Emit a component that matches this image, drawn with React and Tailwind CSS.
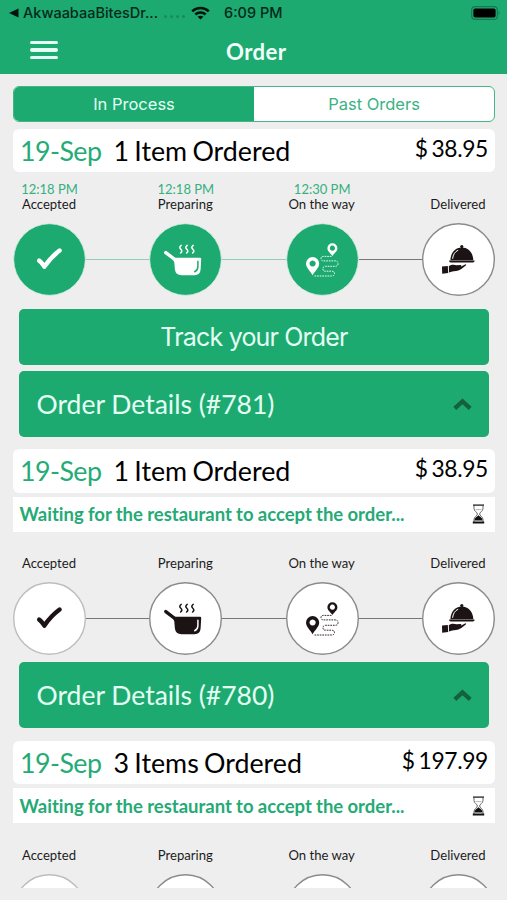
import React from "react";

function CheckIcon() {
  return (
    <path
      d="M26.2 37.6 C28.5 39.2 29.5 41 31.4 43.6 C35.5 37.5 40 32.5 46.6 27.6"
      fill="none"
      stroke="currentColor"
      strokeWidth="4.4"
      strokeLinecap="round"
      strokeLinejoin="round"
    />
  );
}

function PotIcon({ gap }) {
  return (
    <g fill="none" stroke="currentColor" strokeLinecap="round">
      <path d="M16.8 29.6 L26.5 37" strokeWidth="3.4" />
      <path
        d="M23.5 34.8 H51 Q52.3 34.8 52.2 36.2 L51.6 46.5 Q51.2 52.2 45.5 52.2 H32.5 Q26.6 52.2 25.9 46.5 L25.3 39.5 Z"
        fill="currentColor"
        stroke="none"
      />
      <path d="M48.9 38.2 V43.5 Q48.8 47.4 45.7 48.8" stroke={gap} strokeWidth="1.5" />
      <path
        d="M32.2 22.4 q-2.6 1.8 -0.4 3.8 t-0.2 3.8 M38.2 22.4 q-2.6 1.8 -0.4 3.8 t-0.2 3.8 M44.2 22.4 q-2.6 1.8 -0.4 3.8 t-0.2 3.8"
        strokeWidth="1.5"
      />
    </g>
  );
}

function RouteIcon() {
  return (
    <g fill="currentColor">
      <path
        fillRule="evenodd"
        d="M26.6 52.2 C24.5 48.4 20 45 20 40.6 A6.6 6.6 0 0 1 33.2 40.6 C33.2 45 28.7 48.4 26.6 52.2 Z M26.6 37.4 a3.1 3.1 0 1 0 0.01 0 Z"
      />
      <path
        fillRule="evenodd"
        d="M46.4 33 C44.8 30.4 41.4 28.4 41.4 25.2 A5 5 0 0 1 51.4 25.2 C51.4 28.4 48 30.4 46.4 33 Z M46.4 22.6 a2.6 2.6 0 1 0 0.01 0 Z"
      />
      <path
        d="M45.5 33.4 H37.5 Q35 33.4 35 35.6 T37.5 37.9 H49 Q52 37.9 52 40.6 T49 43.3 H39.5 Q37 43.3 37 45.8 T39.5 48.2 H45.5 Q48.5 48.2 48.5 50.6 T45.5 53 H27.5"
        fill="none"
        stroke="currentColor"
        strokeWidth="0.9"
        strokeDasharray="1.7 0.9"
      />
    </g>
  );
}

function ServeIcon() {
  return (
    <g fill="currentColor">
      <circle cx="39.8" cy="23.6" r="1.6" />
      <path d="M28.4 37.2 C28.6 29.5 33.4 24.6 39.8 24.6 S51 29.5 51.3 37.2 Z" />
      <path d="M27.2 37.4 H52.5 V38.6 Q51.8 39.6 50.6 39.6 H29 Q27.8 39.6 27.2 38.6 Z" />
      <path d="M30.6 35.8 C31 31.6 33 28.6 36.2 27.2" fill="none" stroke="#fff" strokeWidth="1" />
      <path d="M20 43.6 L25.8 43 L26.2 50 L20.2 50.8 Z" />
      <path d="M26.8 43.2 C29.5 41.2 32.4 41.6 34.4 42.2 L39 42 Q40 42.8 38.6 43.7 L43.6 41.2 Q44.8 41.4 43.8 42.6 Q39.6 46.4 36.4 47.6 C33.4 48.4 30 48.4 27 49.4 Z" />
    </g>
  );
}

const STEPS = [
  { label: "Accepted", Icon: CheckIcon },
  { label: "Preparing", Icon: PotIcon },
  { label: "On the way", Icon: RouteIcon },
  { label: "Delivered", Icon: ServeIcon },
];

function Step({ step, index, time, done }) {
  const { label, Icon } = step;
  const ring = done
    ? "text-white fill-[#1daa71] stroke-[#d5ebe1]"
    : index === 0
      ? "text-[#1c1315] fill-white stroke-[#bdbdbd]"
      : "text-[#1c1315] fill-white stroke-[#8b8b8b]";
  return (
    <div className="flex w-[73px] flex-col items-center">
      <div className="h-[15px] whitespace-nowrap text-[13px] leading-4 text-[#35b07e]">{time}</div>
      <div className="h-4 whitespace-nowrap pr-px text-[13.1px] leading-4 text-[#1c1c1c]">{label}</div>
      <svg viewBox="0 0 73 73" className={"mt-[11px] h-[73px] w-[73px] shrink-0 " + ring}>
        <circle cx="36.5" cy="36.5" r="35.8" strokeWidth={done ? 0.8 : 1.4} />
        <g className="fill-none stroke-none">
          <Icon gap={done ? "#1daa71" : "#fff"} />
        </g>
      </svg>
    </div>
  );
}

function Progress({ times = [] }) {
  const done = times.length;
  return (
    <div className="flex items-end">
      {STEPS.map((s, i) => (
        <React.Fragment key={s.label}>
          {i > 0 && (
            <div className={"mb-[36px] h-px flex-1 " + (i < done ? "bg-[#93cdb5]" : "bg-[#777]")} />
          )}
          <Step step={s} index={i} time={times[i]} done={i < done} />
        </React.Fragment>
      ))}
    </div>
  );
}

function Summary({ items, price }) {
  return (
    <div className="flex h-[43.5px] justify-between rounded-[6px] bg-white pl-[7px] pr-[7px]">
      <div className="flex whitespace-pre text-[26.8px] leading-[45px]">
        <span className="w-[93.5px] tracking-[-0.55px] text-[#25ab75]">19-Sep</span>
        <span className="[word-spacing:-1.6px]">{items}</span>
      </div>
      <span className="text-[22.8px] leading-[39px] tracking-[-0.35px] [word-spacing:-1.6px]">{price}</span>
    </div>
  );
}

function Waiting() {
  return (
    <div className="mt-1 flex h-[35px] items-center justify-between bg-white pl-[6.5px] pr-[10px]">
      <span className="pt-[2px] text-[18.5px] font-bold text-[#25aa76] [font-variant-ligatures:none] [word-spacing:-0.25px]">Waiting for the restaurant to accept the order...</span>
      <svg viewBox="0 0 13 20" className="h-5 w-[13px]">
        <path d="M2 1.5 V4.5 C2 7.5 5.4 8 5.4 10 S2 12.5 2 15.5 V18.5 M11 1.5 V4.5 C11 7.5 7.6 8 7.6 10 S11 12.5 11 15.5 V18.5" fill="none" stroke="#555" strokeWidth="0.9" />
        <path d="M1 1.1 H12" stroke="#222" strokeWidth="1.3" />
        <path d="M3.6 5.6 H9.4" stroke="#999" strokeWidth="0.7" />
        <path d="M6.5 11.2 C8.2 13 10.2 13.2 10.6 16.6 H2.4 C2.8 13.2 4.8 13 6.5 11.2 Z M0.8 17.4 H12.2 V19.6 H0.8 Z" fill="#111" />
      </svg>
    </div>
  );
}

function Details({ id }) {
  return (
    <div className="mx-[6px] flex h-[66px] items-center justify-between rounded-[5px] bg-[#1daa71] pl-[17.5px] pr-[17px] text-[#e4fff3]">
      <span className="text-[26.5px] leading-[67px]">Order Details (#{id})</span>
      <svg viewBox="0 0 19 13" className="h-[13px] w-[19px]">
        <path d="M1.8 10.4 L9.5 3.4 L17.2 10.4" fill="none" stroke="#14603f" strokeWidth="4.2" />
      </svg>
    </div>
  );
}

export default function App() {
  return (
    <div className="flex h-[900px] w-[507px] flex-col overflow-hidden bg-[#eeeeee] font-['Lato',sans-serif] text-black">
      <header className="h-[74px] shrink-0 bg-[#1daa71]">
        <div className="flex h-[26px] items-center pl-[9px] pr-[6px] font-['Inter',sans-serif] text-[14.5px] font-medium text-[#04291a]">
          <svg viewBox="0 0 10 10" className="h-[10px] w-[10px]">
            <path d="M0 5 L9.5 0.5 V9.5 Z" fill="#03140c" />
          </svg>
          <span className="ml-1 w-[141px] whitespace-nowrap">AkwaabaaBitesDr...</span>
          <div className="flex w-[27px] gap-[3px] pt-[7px]">
            {[0, 1, 2, 3].map((i) => (
              <i key={i} className="h-[3px] w-[3px] rounded-full bg-[#188a5c]" />
            ))}
          </div>
          <svg viewBox="0 0 19 14" className="h-[14px] w-[19px]">
            <g fill="none" stroke="#03140c" strokeWidth="2.5">
              <path d="M1.2 5.3 C5.8 0.8 13.2 0.8 17.8 5.3" />
              <path d="M4.3 8.5 C7.2 5.7 11.8 5.7 14.7 8.5" />
            </g>
            <path d="M9.5 13.6 L6.6 10.7 C8.2 9.3 10.8 9.3 12.4 10.7 Z" fill="#03140c" />
          </svg>
          <span className="ml-[14px] whitespace-nowrap">6:09 PM</span>
          <svg viewBox="0 0 30 14" className="ml-auto h-[14px] w-[30px]">
            <rect x="0.7" y="0.7" width="25.6" height="12.6" rx="3.4" fill="none" stroke="#157a51" strokeWidth="1.2" />
            <rect x="2.4" y="2.4" width="22.2" height="9.2" rx="1.8" fill="#000" />
            <path d="M27.6 4.8 Q29.6 7 27.6 9.2 Z" fill="#157a51" />
          </svg>
        </div>
        <div className="flex h-[48px] items-center pl-[30px]">
          <div className="flex w-[28px] flex-col gap-[4px]">
            <div className="h-[3.6px] rounded-sm bg-[#e4fff3]" />
            <div className="h-[3.6px] rounded-sm bg-[#e4fff3]" />
            <div className="h-[3.6px] rounded-sm bg-[#e4fff3]" />
          </div>
          <h1 className="ml-[168px] pt-[3px] text-[22.2px] font-bold leading-[48px] tracking-[0.4px] text-[#f0fff8]">Order</h1>
        </div>
      </header>

      <main className="mx-[13px] h-[814px] w-[482px] overflow-hidden pt-3">
        <div className="grid h-9 grid-cols-2 overflow-hidden rounded-[6px] border border-[#45b588] bg-white text-center font-['Inter',sans-serif] text-[16.5px] leading-[34px]">
          <div className="bg-[#1daa71] text-[#e4fff3]">In Process</div>
          <div className="text-[#3bb283]">Past Orders</div>
        </div>

        <div className="mt-[6.5px]">
          <Summary items="1 Item Ordered" price="$ 38.95" />
        </div>
        <div className="mt-[9px]">
          <Progress times={["12:18 PM", "12:18 PM", "12:30 PM"]} />
        </div>
        <div className="mx-[6px] mt-[13px] h-[55.5px] rounded-[5px] bg-[#1daa71] text-center font-['Inter',sans-serif] text-[25px] leading-[57px] tracking-[-0.82px] text-[#e4fff3]">
          Track your Order
        </div>
        <div className="mt-[6.5px]">
          <Details id="781" />
        </div>

        <div className="mt-[12px]">
          <Summary items="1 Item Ordered" price="$ 38.95" />
          <Waiting />
        </div>
        <div className="mt-[8.5px]">
          <Progress />
        </div>
        <div className="mt-[7px]">
          <Details id="780" />
        </div>

        <div className="mt-[12.5px]">
          <Summary items="3 Items Ordered" price="$ 197.99" />
          <Waiting />
        </div>
        <div className="mt-[8.5px]">
          <Progress />
        </div>
      </main>
    </div>
  );
}
